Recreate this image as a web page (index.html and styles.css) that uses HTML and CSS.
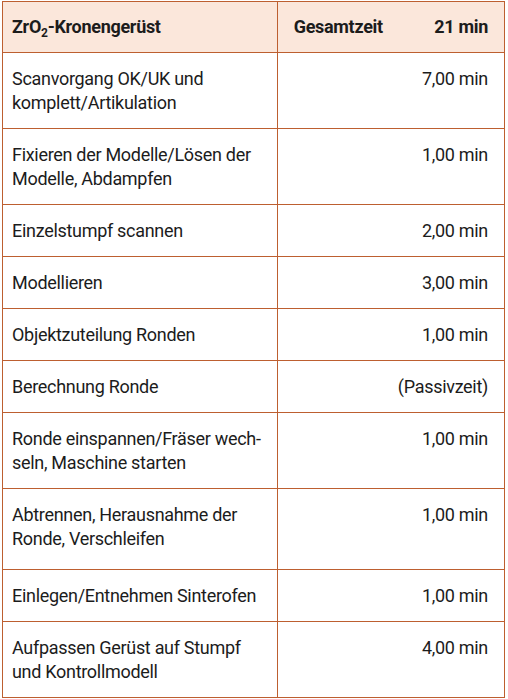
FILE: index.html
```html
<!DOCTYPE html>
<html lang="de">
<head>
<meta charset="utf-8">
<link rel="stylesheet" href="styles.css">
</head>
<body>
<table class="tbl">
  <thead>
    <tr class="head">
      <th class="c-task">ZrO<sub>2</sub>-Kronengerüst</th>
      <th class="c-time"><span class="total"><span>Gesamtzeit</span><span>21 min</span></span></th>
    </tr>
  </thead>
  <tbody>
    <tr><td class="c-task">Scanvorgang OK/UK und<br>komplett/Artikulation</td><td class="c-time">7,00 min</td></tr>
    <tr><td class="c-task">Fixieren der Modelle/Lösen der<br>Modelle, Abdampfen</td><td class="c-time">1,00 min</td></tr>
    <tr><td class="c-task">Einzelstumpf scannen</td><td class="c-time">2,00 min</td></tr>
    <tr><td class="c-task">Modellieren</td><td class="c-time">3,00 min</td></tr>
    <tr><td class="c-task">Objektzuteilung Ronden</td><td class="c-time">1,00 min</td></tr>
    <tr><td class="c-task">Berechnung Ronde</td><td class="c-time">(Passivzeit)</td></tr>
    <tr><td class="c-task">Ronde einspannen/Fräser wech-<br>seln, Maschine starten</td><td class="c-time">1,00 min</td></tr>
    <tr class="tall"><td class="c-task">Abtrennen, Herausnahme der<br>Ronde, Verschleifen</td><td class="c-time">1,00 min</td></tr>
    <tr><td class="c-task">Einlegen/Entnehmen Sinterofen</td><td class="c-time">1,00 min</td></tr>
    <tr><td class="c-task">Aufpassen Gerüst auf Stumpf<br>und Kontrollmodell</td><td class="c-time">4,00 min</td></tr>
  </tbody>
</table>
</body>
</html>
```
FILE: styles.css
```css
html, body {
  margin: 0;
  padding: 0;
  background: #ffffff;
}
body {
  padding: 1px 0 0 2px;
  font-family: Roboto, "Open Sans", sans-serif;
  color: #1c1c1c;
}
.tbl {
  border-collapse: collapse;
  width: 503px;
  font-size: 18px;
  line-height: 24px;
  letter-spacing: -0.3px;
}
.tbl th, .tbl td {
  border: 1.5px solid #bd5f30;
  vertical-align: top;
  padding: 14px 16px 13px 9px;
  text-align: left;
  white-space: nowrap;
}
.tbl .c-task {
  width: 245px;
}
.tbl td.c-time {
  text-align: right;
}
.head th {
  background: #fbe7db;
  font-weight: 700;
  padding: 13px 16px 13px 9px;
  vertical-align: middle;
}
.head th.c-time {
  padding-left: 16px;
}
.total {
  display: flex;
  justify-content: space-between;
}
sub {
  font-size: 12px;
  line-height: 0;
  vertical-align: -4px;
}
.tall td {
  padding-bottom: 18px;
}
```
